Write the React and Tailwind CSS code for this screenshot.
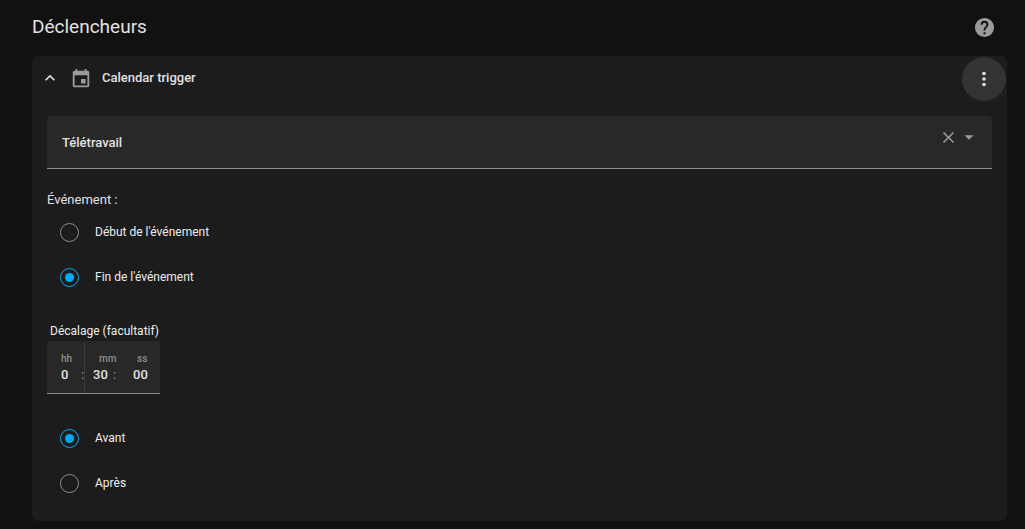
import { useState } from "react";

function Icon({ d, className }) {
  return (
    <svg viewBox="0 0 24 24" fill="currentColor" aria-hidden="true" className={className}>
      <path d={d} />
    </svg>
  );
}

const icons = {
  help: "M15.07,11.25L14.17,12.17C13.45,12.89 13,13.5 13,15H11V14.5C11,13.39 11.45,12.39 12.17,11.67L13.41,10.41C13.78,10.05 14,9.55 14,9C14,7.89 13.1,7 12,7A2,2 0 0,0 10,9H8A4,4 0 0,1 12,5A4,4 0 0,1 16,9C16,9.88 15.64,10.67 15.07,11.25M13,19H11V17H13M12,2A10,10 0 0,0 2,12A10,10 0 0,0 12,22A10,10 0 0,0 22,12C22,6.47 17.5,2 12,2Z",
  chevronUp: "M7.41,15.41L12,10.83L16.59,15.41L18,14L12,8L6,14L7.41,15.41Z",
  calendar: "M19,19H5V8H19M16,1V3H8V1H6V3H5C3.89,3 3,3.89 3,5V19A2,2 0 0,0 5,21H19A2,2 0 0,0 21,19V5C21,3.89 20.1,3 19,3H18V1M17,12H12V17H17V12Z",
  dots: "M12,16A2,2 0 0,1 14,18A2,2 0 0,1 12,20A2,2 0 0,1 10,18A2,2 0 0,1 12,16M12,10A2,2 0 0,1 14,12A2,2 0 0,1 12,14A2,2 0 0,1 10,12A2,2 0 0,1 12,10M12,4A2,2 0 0,1 14,6A2,2 0 0,1 12,8A2,2 0 0,1 10,6A2,2 0 0,1 12,4Z",
  close: "M19,6.41L17.59,5L12,10.59L6.41,5L5,6.41L10.59,12L5,17.59L6.41,19L12,13.41L17.59,19L19,17.59L13.41,12L19,6.41Z",
  menuDown: "M7,10L12,15L17,10H7Z",
};

function RadioGroup({ name, label, options, value, onChange }) {
  return (
    <div role="radiogroup" aria-label={label} className="flex flex-col items-start">
      {options.map((option) => (
        <label key={option} className="flex h-[45px] cursor-pointer items-center gap-4 pl-[13px]">
          <input
            type="radio"
            name={name}
            checked={value === option}
            onChange={() => onChange(option)}
            className="grid size-[19px] cursor-pointer appearance-none place-items-center rounded-full border border-[#8c8c8c] before:size-[9px] before:rounded-full checked:border-[#03a9f4] checked:before:bg-[#03a9f4]"
          />
          <span className="pb-0.5 text-[12px] leading-4 text-[#ececec]">{option}</span>
        </label>
      ))}
    </div>
  );
}

function TimePart({ unit, initial, title, separator, first }) {
  return (
    <label
      className={
        first
          ? "flex w-[38px] flex-col border-r border-[#3a3a3a] pt-3 pl-3.5"
          : "flex w-[38px] flex-col pt-3 pl-2 last:w-[37px]"
      }
    >
      <span
        className={
          first
            ? "text-[10px] leading-3 font-medium text-[#8f8f8f]"
            : "pl-1.5 text-[10px] leading-3 font-medium text-[#8f8f8f]"
        }
      >
        {unit}
      </span>
      <span className="flex items-center text-[13px] leading-5 font-medium">
        <input
          aria-label={title}
          inputMode="numeric"
          defaultValue={initial}
          className={
            separator
              ? "w-5 bg-transparent outline-none"
              : "w-full bg-transparent pl-0.5 outline-none"
          }
        />
        {separator && <span className="font-normal text-[#9b9b9b]">:</span>}
      </span>
    </label>
  );
}

export default function App() {
  const [calendar, setCalendar] = useState("Télétravail");
  const [event, setEvent] = useState("Fin de l'événement");
  const [offset, setOffset] = useState("Avant");

  return (
    <main className="min-h-screen bg-[#111111] pr-[18px] pb-2 pl-8 font-[Roboto,sans-serif] text-[#e1e1e1]">
      <header className="flex h-14 items-center justify-between pr-[11px] pb-0.5">
        <h1 className="text-[19px] leading-6">Déclencheurs</h1>
        <a href="#aide" aria-label="Aide" className="text-[#9b9b9b]">
          <Icon d={icons.help} className="size-[23px]" />
        </a>
      </header>

      <section className="rounded-md bg-[#1c1c1c] pb-[15px]">
        <div className="flex h-[46px] items-center pr-px pl-2">
          <button type="button" aria-label="Réduire" className="flex pb-0.5">
            <Icon d={icons.chevronUp} className="size-5" />
          </button>
          <Icon d={icons.calendar} className="ml-2.5 size-[22px] text-[#9b9b9b]" />
          <h2 className="ml-2.5 grow pb-0.5 text-[13px] font-medium">Calendar trigger</h2>
          <button
            type="button"
            aria-label="Plus d'options"
            className="grid size-11 place-items-center rounded-full bg-[#333333]"
          >
            <Icon d={icons.dots} className="size-[22px]" />
          </button>
        </div>

        <div className="pt-3.5 pr-[15px] pl-[15px]">
          <div className="flex h-[53px] items-center rounded-t border-b border-[#8c8c8c] bg-[#282828] pr-3 pl-[15px]">
            <input
              role="combobox"
              aria-label="Calendrier"
              aria-expanded="false"
              aria-controls="calendriers"
              value={calendar}
              onChange={(e) => setCalendar(e.target.value)}
              className="min-w-0 grow bg-transparent pt-0.5 text-[13px] font-medium outline-none"
            />
            <button
              type="button"
              aria-label="Effacer"
              onClick={() => setCalendar("")}
              className="mb-2.5 text-[#9b9b9b]"
            >
              <Icon d={icons.close} className="size-[19px]" />
            </button>
            <button type="button" aria-label="Ouvrir la liste" className="mb-2.5 text-[#9b9b9b]">
              <Icon d={icons.menuDown} className="size-[22px]" />
            </button>
          </div>

          <p className="mt-5 text-[13px] leading-[21px]">Événement :</p>
          <RadioGroup
            name="event"
            label="Événement"
            options={["Début de l'événement", "Fin de l'événement"]}
            value={event}
            onChange={setEvent}
          />

          <p className="mt-[21px] pl-[3px] text-[12px] leading-5 text-[#ececec]">
            Décalage (facultatif)
          </p>
          <div className="mb-[22px] flex h-[53px] w-fit rounded-tl border-b border-[#8c8c8c] bg-[#282828]">
            <TimePart unit="hh" title="Heures" initial="0" separator first />
            <TimePart unit="mm" title="Minutes" initial="30" separator />
            <TimePart unit="ss" title="Secondes" initial="00" />
          </div>

          <RadioGroup
            name="offset"
            label="Décalage"
            options={["Avant", "Après"]}
            value={offset}
            onChange={setOffset}
          />
        </div>
      </section>
    </main>
  );
}
